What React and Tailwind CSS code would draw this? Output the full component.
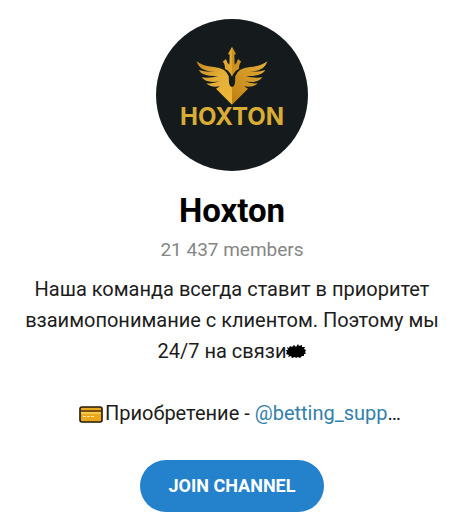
import React from 'react';

export default function App() {
  return (
    <main className="bg-white pl-3 pt-[19px] pb-4 font-[Roboto,sans-serif] text-black">
      <div className="flex flex-col items-center text-center">
        <Avatar />

        <h1 className="mt-5 text-[33px] leading-10 font-bold">Hoxton</h1>
        <p className="mt-[3px] text-[19px] leading-8 text-[#868686]">21 437 members</p>

        <div className="mt-2 text-[20px] leading-[31px] text-[#1c1c1c]">
          <p>
            Наша команда всегда ставит в приоритет
            <br />
            взаимопонимание с клиентом. Поэтому мы
            <br />
            24/7 на связи<Burst />
          </p>
          <p className="mt-[31px] pl-4">
            <Card />Приобретение - <a href="#betting" className="text-[#3280ab]">@betting_supp</a>…
          </p>
        </div>

        <button type="button" className="mt-[31px] rounded-full bg-[#2481cc] px-[29px] py-3 text-[18px] leading-7 font-bold text-white">
          JOIN CHANNEL
        </button>
      </div>
    </main>
  );
}

const Avatar = () => (
  <div className="flex h-38 w-38 flex-col items-center rounded-full bg-[#151b1d] pt-[27px]">
    <svg viewBox="78 18 216 177" className="h-[59px] w-[72px]" aria-hidden="true">
      <defs>
        <linearGradient id="gold" x1="0" x2="1" y1="0" y2="1">
          <stop offset="0" stopColor="#c98a1e" />
          <stop offset="0.5" stopColor="#e3ae38" />
          <stop offset="1" stopColor="#f0b93a" />
        </linearGradient>
        <linearGradient id="goldDark" x1="1" x2="0" y1="0" y2="1">
          <stop offset="0" stopColor="#e3ae38" />
          <stop offset="1" stopColor="#c07f10" />
        </linearGradient>
      </defs>
      {/* Trident */}
      <path fill="#e0a730" d="M186 20 L174 42 L179 44 L178 74 Q172 70 168 57 L158 65 Q165 70 165 87 Q178 92 186 110 Z" />
      <path fill="#cd9120" d="M186 20 L198 42 L193 44 L194 74 Q200 70 204 57 L214 65 Q207 70 207 87 Q194 92 186 110 Z" />
      {/* Left wing */}
      <path fill="url(#gold)" d="M80 64 Q98 79 132 81 Q168 84 176 108 Q177 118 177 129 Q178 138 186 141 L186 194 L138 146 L150 139 Q122 144 109 130 Q130 132 148 124 Q108 131 95 112 Q122 115 144 108 Q96 110 86 90 Q106 96 134 96 Q88 94 80 64 Z" />
      {/* Right wing */}
      <path fill="url(#goldDark)" d="M292 64 Q274 79 240 81 Q204 84 196 108 Q195 118 195 129 Q194 138 186 141 L186 194 L234 146 L222 139 Q250 144 263 130 Q242 132 224 124 Q264 131 277 112 Q250 115 228 108 Q276 110 286 90 Q266 96 238 96 Q284 94 292 64 Z" />
    </svg>
    <span className="font-[Inter,sans-serif] text-[24px] leading-6 font-bold text-[#d9ad35]">HOXTON</span>
  </div>
);

const Burst = () => (
  <svg viewBox="0 0 20 16" className="inline-block h-4 w-5 align-[-2px]" aria-hidden="true">
    <path d="M1 3 L3 4 L4 2 L6 3 L8 1 L10 3 L12 0 L13 2 L16 1 L16 3 L19 3 L18 5 L20 6 L19 8 L20 10 L18 10 L18 12 L16 12 L14 14 L12 13 L10 14 L9 13 L6 14 L5 12 L2 13 L3 11 L0 10 L1 8 L0 6 L2 6 Z" />
  </svg>
);

const Card = () => (
  <svg viewBox="0 0 24 17" className="mr-0.5 inline-block h-[17px] w-6 align-[-3px]" aria-hidden="true">
    <rect x="1" y="1" width="22" height="15" rx="2" fill="#e9a91c" stroke="#211708" strokeWidth="1.6" />
    <path fill="#7a4f10" d="M2 4h20v2H2z" />
    <path fill="#f7c94a" d="M2 6h20v2H2z" />
    <path stroke="#ffe79a" strokeWidth="1.2" strokeDasharray="3 1" d="M4 10.5h12" />
  </svg>
);
